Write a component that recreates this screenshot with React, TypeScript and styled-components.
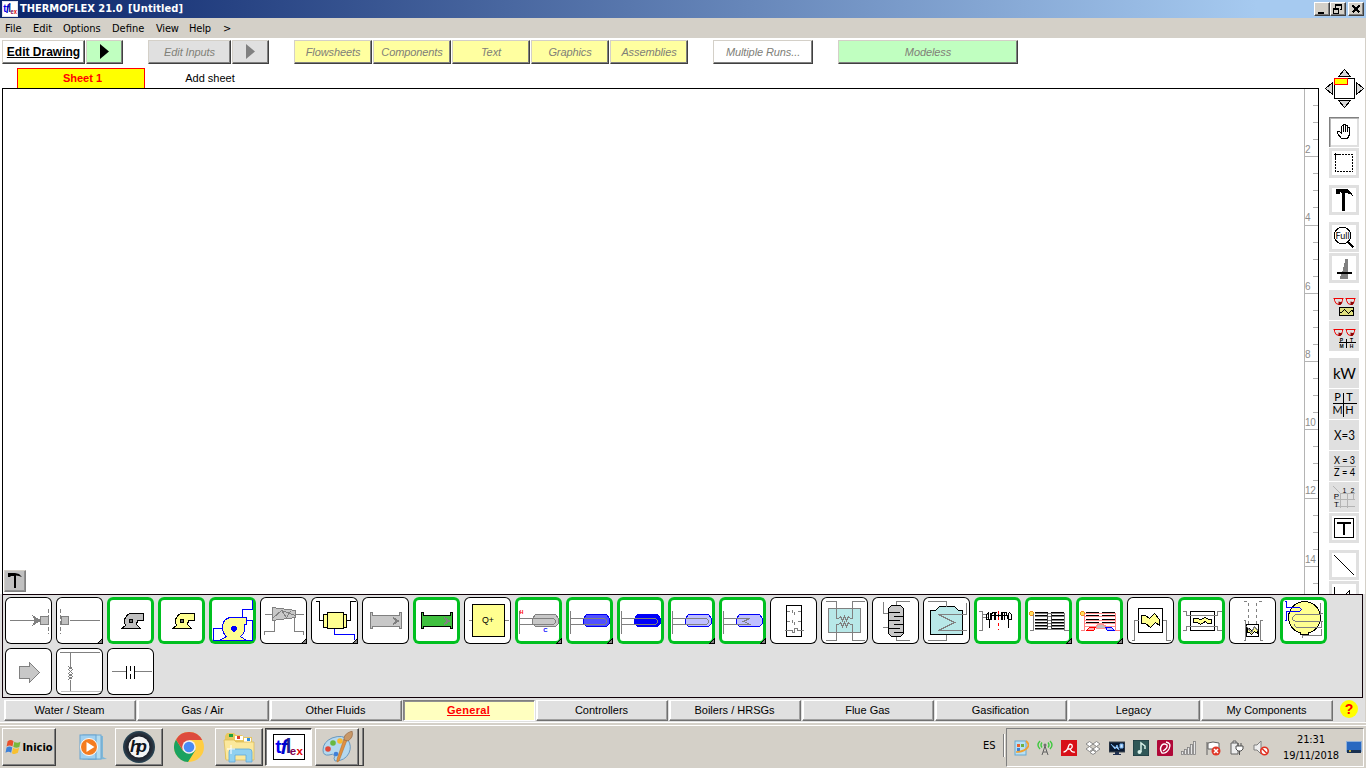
import React from "react";
import styled, { createGlobalStyle, css } from "styled-components";

const tahoma = `"DejaVu Sans Condensed", "DejaVu Sans", sans-serif`;
const arial = `"Liberation Sans", Arial, sans-serif`;

const Global = createGlobalStyle`
  body { margin: 0; overflow: hidden; background: #fff; font-family: ${arial}; font-size: 11px; color: #000; }
  * { box-sizing: border-box; }
  svg { display: block; flex: none; }
`;

const Window = styled.div`
  width: 1366px; height: 768px; display: flex; flex-direction: column; overflow: hidden;
`;

/* ---------- title and menu ---------- */
const TitleBar = styled.header`
  height: 18px; flex: none; display: flex; align-items: center; padding: 0 1px 0 2px;
  background: linear-gradient(90deg, #0a246a, #a6caf0 92%);
  color: #fff; font: bold 11px ${tahoma};
`;
const TitleText = styled.span<{ $w: number; $ls: number }>`
  width: ${p => p.$w}px; letter-spacing: ${p => p.$ls}px; white-space: nowrap; line-height: 18px;
`;
const TitleLogo = styled.div`width: 18px; height: 16px;`;
const WindowButtons = styled.div`margin-left: auto; display: flex; padding-right: 1px;`;
const WindowButton = styled.div<{ $gap?: boolean }>`
  width: 16px; height: 14px; margin-left: ${p => (p.$gap ? 2 : 0)}px; background: #d4d0c8;
  border: 1px solid; border-color: #fff #404040 #404040 #fff; box-shadow: inset -1px -1px #808080;
`;
const MenuBar = styled.nav`
  height: 20px; flex: none; display: flex; align-items: center; padding-left: 5px;
  background: #d4d0c8; font: 11px ${tahoma};
`;
const MenuItem = styled.span<{ $w: number; $ls?: number }>`
  width: ${p => p.$w}px; letter-spacing: ${p => p.$ls ?? 0}px; white-space: nowrap;
`;

/* ---------- workspace ---------- */
const Workspace = styled.main`height: 556px; flex: none; display: flex; background: #fff;`;
const LeftPane = styled.div`width: 1319px; display: flex; flex-direction: column;`;
const Toolbar = styled.div`height: 26px; padding: 2px 0 0 2px; display: flex; gap: 1px;`;
const ToolButton = styled.div<{ $w: number; $bg: string; $ml?: number; $live?: boolean }>`
  width: ${p => p.$w}px; height: 24px; margin-left: ${p => p.$ml ?? 0}px; flex: none;
  display: flex; align-items: center; justify-content: center; background: ${p => p.$bg};
  border: solid; border-width: 1px; border-color: #d4d0c8 #404040 #404040 #d4d0c8;
  box-shadow: inset -1px -1px #808080; white-space: nowrap; padding: 0 0 1px 0;
  font: italic 11px ${arial}; color: #808078; letter-spacing: -.1px;
  ${p => p.$live && css`font: bold 12px ${arial}; color: #000; text-decoration: underline; letter-spacing: 0;`}
`;
const SheetBar = styled.div`height: 24px; padding: 4px 0 0 17px; display: flex; align-items: stretch;`;
const SheetTab = styled.div`
  width: 128px; background: #ff0; border: 1px solid #f00; border-bottom: 0; color: #f00;
  font-weight: bold; text-align: center; line-height: 19px; padding-left: 3px;
`;
const AddSheet = styled.div`width: 130px; text-align: center; line-height: 20px;`;
const CanvasBox = styled.section`
  height: 506px; margin-left: 2px; border: solid #000; border-width: 1px 1px 0 1px;
  display: flex; align-items: flex-end; overflow: hidden;
`;
const CanvasArea = styled.div`flex: 1; padding: 0 0 2px 1px;`;
const HammerButton = styled.div`
  width: 22px; height: 22px; background: #c0c0c0; border: 1px solid;
  border-color: #d4d0c8 #808080 #808080 #d4d0c8; box-shadow: inset -1px -1px #909090;
`;
const Ruler = styled.div`
  width: 14px; height: 505px; border-left: 1px solid #b4b4b4; overflow: hidden;
  display: flex; flex-direction: column; align-items: flex-end; color: #8c8c8c; font: 10px ${arial};
`;
const Tick = styled.div<{ $major: boolean }>`
  width: ${p => (p.$major ? 13 : 5)}px; height: 17.07px; flex: none; border-bottom: 1px solid #b4b4b4;
  line-height: 10px; padding-top: 5px; letter-spacing: -.4px; white-space: nowrap;
`;

const RightPane = styled.aside`
  width: 47px; border-right: 1px solid #d4d0c8; padding: 31px 0 0 6px; overflow: hidden;
`;
const ToolGroup = styled.div<{ $mt?: number }>`
  margin: ${p => p.$mt ?? 7}px 0 0 4px; display: flex; flex-direction: column; gap: 1px;
`;
const SideTool = styled.div<{ $kind: "white" | "gray" | "pressed" }>`
  width: 30px; height: 30px; background: ${p => (p.$kind === "gray" ? "#e0e0e0" : "#fff")};
  ${p => p.$kind === "white" && css`box-shadow: inset 0 0 0 3px #e0e0e0;`}
  ${p => p.$kind === "pressed" && css`box-shadow: inset 1px 1px #808080, inset 2px 2px #b8b8b8, inset -2px -2px #e0e0e0;`}
`;

/* ---------- palette ---------- */
const Palette = styled.section`
  height: 104px; width: 1361px; flex: none; margin-left: 2px; background: #e0e0e0; border: 1px solid #100008;
  padding: 2px; display: flex; flex-wrap: wrap; gap: 4px; align-content: flex-start;
`;
const Bottom = styled.div`flex: none; height: 128px; background: #e0e0e0; border-right: 1px solid #d4d0c8;`;
const Tile = styled.div<{ $green?: boolean }>`
  width: 47px; height: 47px; background: #fff; border-radius: 6px;
  box-shadow: inset 0 0 0 ${p => (p.$green ? "3px #00c020" : "1px #000")};
`;
const CategoryBar = styled.div`height: 24px; padding: 2px 0 0 4px; display: flex; gap: 1px;`;
const Category = styled.div<{ $on?: boolean }>`
  width: 132px; height: 21px; padding-right: 1px; text-align: center; line-height: 18px; background: #e0e0e0; flex: none;
  border: 1px solid; border-color: #fff #707070 #707070 #fff; box-shadow: inset -1px -1px #a0a0a0, inset 1px 0 #fff;
  ${p => p.$on && css`background: #ffffc0; color: #f00; font-weight: bold; text-decoration: underline; letter-spacing: .3px;
    border-color: #808080 #fff #fff #808080; box-shadow: inset 1px 1px #909090;`}
`;
const Help = styled.div`
  width: 18px; height: 18px; border-radius: 50%; background: #ff0; color: #f00; margin: 0 0 0 6px;
  font: bold 14px/18px ${arial}; text-align: center;
`;

/* ---------- taskbar ---------- */
const Taskbar = styled.footer`
  height: 46px; flex: none; background: #d4d0c8; border-top: 1px solid #fff; box-shadow: inset 0 2px #d4d0c8, inset 0 3px #fff;
  display: flex; padding: 5px 2px 1px 2px;
`;
const TaskButton = styled.div<{ $w: number; $ml?: number; $look?: "up" | "down" | "flat" }>`
  width: ${p => p.$w}px; height: 38px; margin-left: ${p => p.$ml ?? 0}px; flex: none;
  display: flex; align-items: center; justify-content: center;
  ${p => (p.$look ?? "up") === "up" && css`border: 1px solid; border-color: #fff #404040 #404040 #fff; box-shadow: inset -1px -1px #808080;`}
  ${p => p.$look === "down" && css`background: #fff; border: 1px solid; border-color: #404040 #fff #fff #404040; box-shadow: inset 1px 1px #808080;`}
  font: bold 11px ${tahoma}; gap: 0;
`;
const StackEdge = styled.div`width: 5px; height: 38px; border: solid #404040; border-width: 0 1px 1px 0; box-shadow: inset -1px 0 #808080;`;
const Lang = styled.div`margin-left: auto; font: 11px/35px ${tahoma}; width: 20px;`;
const Grip = styled.div`width: 2px; margin: 6px 1px 10px 0; background: linear-gradient(90deg, #808080 50%, #fff 50%);`;
const Tray = styled.div`
  width: 358px; height: 39px; border: 1px solid; border-color: #808080 #fff #fff #808080;
  display: flex; align-items: center; padding-left: 6px;
`;
const TrayIcons = styled.div`display: flex; gap: 8px;`;
const Clock = styled.div`
  width: 56px; margin-left: 14px; text-align: center; font: 11px/16px ${tahoma}; white-space: nowrap; letter-spacing: -.1px;
`;
const DesktopIcon = styled.svg`margin-left: 7px;`;

/* ---------- drawing helpers ---------- */
const G = "#808080";
const L = ({ d, c = G, w = 1, f = "none", dash }: { d: string; c?: string; w?: number; f?: string; dash?: string }) => (
  <path d={d} stroke={c} strokeWidth={w} fill={f} strokeDasharray={dash} />
);
const Art = ({ s, children }: { s: number; children: React.ReactNode }) => (
  <svg width={s} height={s} viewBox={`0 0 ${s} ${s}`} shapeRendering="crispEdges">
    <g transform="translate(.5 .5)">{children}</g>
  </svg>
);
const Txt = ({ x, y, s, c = "#000", b, thin, children, w }: { x: number; y: number; s: number; c?: string; b?: boolean; thin?: boolean; w?: number; children: string }) => (
  <text x={x} y={y} fontSize={s} fill={c} textAnchor="middle" fontFamily={thin ? `Lato, ${arial}` : arial} fontWeight={b ? 700 : 400}
    textLength={w} lengthAdjust="spacingAndGlyphs">{children}</text>
);

const Fan = ({ f }: { f: string }) => (
  <>
    <L d="M14 31H33L29 27L30 23H36V16H24A8 8 0 0 0 18 28L14 31Z" c="#000" f={f} />
    <rect x="22" y="22" width="3" height="3" fill="#707070" stroke="#000" />
  </>
);
const Pipe = ({ f, c }: { f: string; c: string }) => (
  <>
    <path d="M8 15H10V18H37V15H39V31H37V29H10V31H8Z" fill={f} stroke={c} />
    <path d="M31 20L36 23.5L31 27L33 23.5Z" fill={G} stroke={G} />
  </>
);
const Capsule = ({ f, c, zig }: { f: string; c: string; zig?: boolean }) => (
  <>
    <path d="M20 17H40L43 21V26L40 29H20L17 26V21Z" fill={f} stroke={c} />
    <path d="M4 13V36" stroke={G} />
    {zig ? <L d="M4 21H30L24 24L31 27H4" /> : <L d="M4 21H38L40 23V25L38 27H4" />}
  </>
);
const Bank = ({ d, gray }: { d: string; gray?: boolean }) => (
  <>
    <circle cx="6" cy="16" r="2" fill="#ffe060" stroke="#f09020" />
    {[15, 18, 22, 25, 28, 31].map(y => (
      <g key={y}>
        {gray && <path d={`M9 ${y + 1}H39`} stroke={d} />}
        {!gray && y < 31 && <path d={`M8 ${y + 1}H39`} stroke={d} />}
        {(gray || y < 28) && <path d={`M9 ${y}H22M25 ${y}H38`} stroke="#000" />}
      </g>
    ))}
    {gray && <path d="M22 15V31M26 16V31" stroke="#404040" />}
  </>
);

type Item = { g?: boolean; m?: boolean; art: React.ReactNode };
const tiles: Item[] = [
  { art: <><L d="M43 11V36" dash="4 2" /><L d="M4 23H30" /><path d="M28 19L35 23L28 27L30 23Z" fill={G} stroke={G} /><rect x="35" y="19" width="8" height="8" fill="#c0c0c0" stroke={G} /></> },
  { m: true, art: <><L d="M4 11V36" dash="4 2" /><L d="M13 23H43" /><rect x="5" y="19" width="7" height="8" fill="#c0c0c0" stroke={G} /></> },
  { g: true, art: <Fan f="#c0c0c0" /> },
  { g: true, art: <Fan f="#ffff90" /> },
  { g: true, art: <><path d="M10 43L17 39A12 12 0 0 1 16 22L20 20H37V27H35A12 12 0 0 1 31 39L37 43Z" fill="#ffff90" stroke="#00f" /><path d="M23 28H26L27 30V32L25 34H23L21 32V30Z" fill="#00f" /><L c="#00f" d="M4 43V31H12M43 2V12H33V20M37 23H43V43M4 43H43" /></> },
  { m: true, art: <><path d="M12 10L35 13V20L12 23Z" fill="#c8c8c8" stroke={G} /><L d="M4 17H12M35 17H43M14 22V34H4V37M34 20V34H43V37M12 21L21 13L26 20L30 14M21 13L35 18" /></> },
  { m: true, art: <><L c="#000" d="M4 4H8V23H12M35 23H39V4H44" /><rect x="12" y="17" width="23" height="13" fill="#ffff90" stroke="#000" /><rect x="16" y="15" width="16" height="16" fill="#ffff90" stroke="#000" /><L c="#00f" d="M23 31V37H43V42" /></> },
  { art: <Pipe f="#c8c8c8" c={G} /> },
  { g: true, art: <Pipe f="#40c040" c="#000" /> },
  { art: <><L d="M4 23H8M40 23H44" /><rect x="8" y="7" width="32" height="32" fill="#ffff90" stroke="#000" /><Txt x={23.5} y={25.5} s={9} w={12}>Q+</Txt></> },
  { g: true, m: true, art: <><Capsule f="#c8c8c8" c={G} /><Txt x={6} y={16} s={5} c="#f00" b>H</Txt><Txt x={30} y={34} s={6} c="#00f" b>C</Txt></> },
  { g: true, m: true, art: <Capsule f="#5050ff" c="#0000f0" /> },
  { g: true, art: <Capsule f="#0000f8" c="#0000f8" /> },
  { g: true, m: true, art: <Capsule f="#c0c0ff" c="#0000f8" /> },
  { g: true, m: true, art: <Capsule f="#c0c0ff" c="#0000f8" zig /> },
  { art: <><rect x="16" y="8" width="15" height="31" stroke="#000" fill="#fff" /><L d="M16 14H19M22 12V15M24 14V17M27 14H30M16 24H19M22 22V25M24 24V27M27 24H30M14 33H22V35H24V31H27V33H33" /></> },
  { art: <><rect x="7" y="11" width="32" height="24" fill="#b8e8e8" stroke={G} /><L d="M4 4H15V21H17L19 19L21 23L23 19L25 23L27 19L29 21H31V4H43M4 43H15V27H17L19 25L21 29L23 25L25 29L27 25L29 27H31V43H43" /></> },
  { art: <><L d="M11 4V16H16M10 30H16M24 8V4H37M24 39V43H37" /><path d="M19 8H28L31 11V36L28 39H19L16 36V11Z" fill="#c8c8c8" stroke="#000" /><L c="#000" d="M16 15H27M21 19H31M16 23H27M21 27H31M16 31H27M21 35H31" /></> },
  { art: <><path d="M7 13H12L16 9H31L35 13H39V37H7Z" fill="#b8e8e8" stroke="#000" /><L d="M4 4H23V9M43 5V17H15L31 25L15 33H43M4 43H23V37" /></> },
  { g: true, art: <><L d="M4 14H8V33H4M8 17H14M8 20H14" /><L c="#000" d="M15 30V22H12V17L14 15V22M16 15V22M18 15L17 17V22M20 15V22M21 15V22M24 15V22M27 15V22M28 15V22M30 15V22M32 15L33 22M34 15V22H37V17L35 15M34 22V30M17 15H22M26 15H32M16 18H34" /><L c="#f00" d="M24 13V32" dash="3 3" /></> },
  { g: true, m: true, art: <><Bank gray d={G} /><L d="M4 33H8V16M39 15V33H43" /></> },
  { g: true, m: true, art: <><Bank d="#ff9090" /><L c="#ff8080" d="M4 33H8V16M39 15V33H43" /><path d="M20 31V28H21V27H27V28H29V31Z" fill="#c0c0c0" stroke="#ff9090" /><path d="M10 33L13 30H19L17 33Z" fill="#ffb0b0" stroke="#f00" /><path d="M29 30H35L38 33H31Z" fill="#c0c0ff" stroke="#00f" /></> },
  { art: <><rect x="11" y="11" width="24" height="24" fill="#fff" stroke="#000" /><L d="M4 43H7V23H11M35 23H39V43H43" /><path d="M14 18H18L22 21L27 16L32 22V28L28 25L23 30L18 26H14Z" fill="#ffff90" stroke="#000" /></> },
  { g: true, art: <><rect x="12" y="14" width="24" height="19" fill="#fff" stroke="#000" /><L d="M4 14H8V18H39V14H43M4 33H8V29H39V33H43" /><path d="M15 21H19L22 22L27 20L30 22H33V26H29L27 24L22 27L19 25H15Z" fill="#ffff90" stroke="#000" /></> },
  { art: <><L d="M14 4H19V27M32 4H27V27" dash="3 3" /><rect x="17" y="27" width="12" height="12" fill="#fff" stroke="#000" /><path d="M18 31H20L22 33L25 30L28 33V36L25 34L22 37L20 35H18Z" fill="#ffff90" stroke="#000" /><L d="M14 23H16V43H14M33 23H31V43H33M17 29L22 35L25 29L29 34" /></> },
  { g: true, art: <><circle cx="24" cy="20" r="16" fill="#ffff90" stroke="#000" /><path d="M20 35V37H28V35" fill="#ffff90" stroke="#000" /><L c="#00f" d="M4 4H6V10H19L21 12L19 14H6V23H4" /><L d="M40 5V17H15L12 20V22L15 24H42M41 24V30H16L14 28V26M40 16H42M22 40V38H41V31" /></> },
  { art: <path d="M14 18H24V14L34 24L24 34V30H14Z" fill="#c8c8c8" stroke={G} /> },
  { art: <><L d="M3 4H43M14 4V18M14 31V43" /><L d="M4 43H44" c="#c0c0c0" /><L d="M12 18L16 21L12 25L16 28L12 31M16 18L12 21L16 25L12 28L16 31" /></> },
  { art: <><L d="M4 23H19M27 23H44" /><L c="#000" d="M19 17V30M27 17V30" /><L c="#000" d="M23 17V30" dash="5 3" /></> },
];

const Cups = () => (
  <g shapeRendering="auto">
    <L c="#f00000" d="M4 8H14M5 8V10Q6 14 9.500 14Q12 14 13 10V8M16 8H26M17 8V10Q18 14 21 14Q24 14 25 10V8" />
    <path d="M9 11L13 12L11 14.500H9ZM21 11L25 12L23 14.500H21Z" fill="#900000" />
  </g>
);

const groups: { k: "white" | "gray" | "pressed"; a: React.ReactNode }[][] = [
  [
    { k: "pressed", a: <path d="M12 21L8 16V14H10L12 16V9L13 8L14 9V7H16V8L18 8V10L20 10V17L18 21Z M14 9V14M16 8V14M18 10V14" fill="#fff" stroke="#000" /> },
    { k: "white", a: <><rect x="6" y="6" width="17" height="17" fill="none" stroke="#000" strokeDasharray="2 1" /><L c="#000" d="M6 4V9M4 6H9" /></> },
  ],
  [{ k: "white", a: <path d="M6.500 3.500H17.500L21.500 6.500L23.500 10.500L20.500 8.500L15.500 7.500V25.500H12.500V7.500L10.500 6.500V8.500H6.500Z" fill="#000" /> }],
  [
    { k: "white", a: <><circle cx="13" cy="13" r="8.3" fill="#fff" stroke="#000" /><L c="#000" w={2} d="M18 19L24 25" /><Txt x={13} y={16.5} s={10} w={14} thin>Full</Txt></> },
    { k: "white", a: <><path d="M16 5H18L19 25H10L13 17Z" fill={G} /><L c="#000" w={2} d="M7 19.5H22" /></> },
  ],
  [
    { k: "gray", a: <><Cups /><rect x="10" y="17" width="14" height="8" fill="#e0e080" stroke="#000" /><L c="#000" d="M10 22H12L15 19L19 23L22 20L24 21" /></> },
    { k: "gray", a: <><Cups /><L c="#000" d="M9 21H26M17 17V26" /><Txt x={12} y={20} s={5} b>P</Txt><Txt x={22} y={20} s={5} b>T</Txt><Txt x={12} y={26} s={5} b>M</Txt><Txt x={22} y={26} s={5} b>H</Txt></> },
  ],
  [
    { k: "gray", a: <Txt x={15} y={20} s={16} w={23} thin>kW</Txt> },
    { k: "gray", a: <><L c="#000" d="M14 3V27M3 14H27" /><Txt x={8} y={11.5} s={11} thin>P</Txt><Txt x={20} y={11.5} s={11} thin>T</Txt><Txt x={8} y={24.5} s={11} thin>M</Txt><Txt x={20} y={24.5} s={11} thin>H</Txt></> },
    { k: "gray", a: <Txt x={15} y={19.5} s={14} w={21} thin>X=3</Txt> },
    { k: "gray", a: <><Txt x={15} y={12} s={11} w={21} thin>X = 3</Txt><L c="#a0a0a0" d="M4 15H26" /><Txt x={15} y={24.500} s={11} w={21} thin>Z = 4</Txt></> },
    { k: "gray", a: <><L c="#b4b4b4" d="M4 4L11 11V25M18 11V25M11 11H25M5 17H25M5 24H25M24 11V17" /><Txt x={15} y={10} s={7}>1</Txt><Txt x={23} y={10} s={7}>2</Txt><Txt x={7} y={16.500} s={8}>P</Txt><Txt x={7} y={24} s={8}>T</Txt></> },
    { k: "white", a: <><rect x="5" y="5" width="19" height="19" fill="#fff" stroke="#000" /><path d="M7.500 8.500H21.500V10.500H15.500V21.500H13.500V10.500H7.500Z" fill="#000" /></> },
  ],
  [
    { k: "white", a: <L c="#000" d="M5 5L25 25" /> },
    { k: "white", a: <L c="#000" d="M5 5V25M16 13L20 9V13" /> },
  ],
];

const TflexLogo = ({ w, h, border }: { w: number; h: number; border?: boolean }) => (
  <svg width={w} height={h} viewBox="0 0 32 26" preserveAspectRatio="none">
    <rect x=".5" y=".5" width="31" height="25" fill="#fff" stroke={border ? "#000" : "#fff"} />
    <g fontFamily={arial} textAnchor="middle">
      <text x="5.500" y="18.500" fontSize="19" fill="#0000f0">t</text>
      <text x="11" y="20" fontSize="21" fontStyle="italic" fill="#0000d0">f</text>
      <text x="15.500" y="18.500" fontSize="20" fill="#202090">l</text>
      <text x="20" y="21" fontSize="11.5" fontWeight="700" fill="#800050">e</text>
      <text x="26.600" y="21" fontSize="11.5" fontWeight="700" fill="#e00000">x</text>
    </g>
  </svg>
);

const Flag = () => (
  <svg width="17" height="16" viewBox="0 0 15 15">
    <path d="M2 2Q5 0 7.5 2L6.500 7Q4 5 1 7Z" fill="#e8502c" /><path d="M8.300 2.500Q11 4.500 14 2.500L13 7.500Q10 9 7.300 7.300Z" fill="#78b83c" />
    <path d="M1 8Q4 6 6.300 8L5.300 13Q3 11 0 13Z" fill="#3c80d8" /><path d="M7.100 8.300Q10 10 12.800 8.300L11.600 13Q8.500 15 6 13.300Z" fill="#f8c030" />
  </svg>
);
const MediaIcon = () => (
  <svg width="32" height="32" viewBox="0 0 32 32">
    <path d="M11 4L27 5V26L31 28L12 29Z" fill="#80b8d8" /><rect x="7" y="4" width="18" height="24" fill="#b4dcf0" stroke="#70a8d0" />
    <rect x="4" y="4" width="16" height="24" fill="#a0d0f0" stroke="#68a4d0" />
    <circle cx="13" cy="16" r="8.500" fill="#f47c20" stroke="#fff" /><path d="M10.500 11V21L18.500 16Z" fill="#fff" />
  </svg>
);
const HpIcon = () => (
  <svg width="32" height="32" viewBox="0 0 32 32">
    <defs><radialGradient id="hp"><stop offset=".5" stopColor="#10141c" /><stop offset=".85" stopColor="#28303c" /><stop offset="1" stopColor="#284858" /></radialGradient></defs>
    <circle cx="16" cy="16" r="16" fill="url(#hp)" /><circle cx="16" cy="16" r="10.500" fill="#f4f4f4" />
    <text x="15.500" y="21" fontSize="17" fontWeight="700" fontStyle="italic" fill="#10141c" textAnchor="middle" fontFamily={arial} textLength="17">hp</text>
  </svg>
);
const ChromeIcon = () => (
  <svg width="30" height="30" viewBox="0 0 30 30">
    <circle cx="15" cy="15" r="15" fill="#ffcd42" /><path d="M15 15L2 7.500A15 15 0 0 1 28.200 8H15Z" fill="#dd4b3e" />
    <path d="M2 7.500A15 15 0 0 0 14 30L21.500 18L15 15L8.800 18.500Z" fill="#1aa260" /><path d="M2 7.500L8.800 18.500L15 8H2Z" fill="#dd4b3e" />
    <circle cx="15" cy="15" r="6.800" fill="#f1f1f1" /><circle cx="15" cy="15" r="5.300" fill="#4a8af4" />
  </svg>
);
const FolderIcon = () => (
  <svg width="34" height="32" viewBox="0 0 34 32">
    <path d="M3 5L5 2H12L14 4H20L22 6H30V28H3Z" fill="#e8c860" /><rect x="7" y="3" width="4" height="3" fill="#20a040" />
    <rect x="13" y="5" width="8" height="4" fill="#fff" /><rect x="15" y="5" width="3" height="3" fill="#e04030" /><rect x="22" y="7" width="7" height="4" fill="#fff" /><rect x="25" y="7" width="3" height="3" fill="#3090e0" />
    <path d="M2 9H12L14 11H32V29H4Z" fill="#fbe89c" stroke="#d8b850" strokeWidth=".7" />
    <path d="M7 31V21Q7 18 10 18H27Q30 18 30 21V31H24V24H13V31Z" fill="#90d0f0" stroke="#60a8d8" strokeWidth=".8" /><path d="M9 14V23M5 18H13" stroke="#fff" />
  </svg>
);
const PaintIcon = () => (
  <svg width="33" height="32" viewBox="0 0 33 32">
    <path d="M2 19Q2 11 11 7Q22 3 27 9Q31 15 28 22Q24 30 14 30Q12 27 14 25Q12 22 8 24Q2 25 2 19Z" fill="#b4d8ee" stroke="#6898c0" />
    <circle cx="7" cy="18" r="2.800" fill="#e04838" /><circle cx="12" cy="12" r="2.800" fill="#68b840" /><circle cx="19" cy="10" r="2.800" fill="#f8b830" /><circle cx="15" cy="23" r="2.300" fill="#4080d8" />
    <path d="M26 9L18 30L16 31V28L23 8Z" fill="#e09040" stroke="#b06820" strokeWidth=".5" /><path d="M23 9Q22 3 31 0Q33 6 27 10Z" fill="#c89868" stroke="#906038" strokeWidth=".6" />
  </svg>
);

const trayArt: React.ReactNode[] = [
  <><rect x="2" y="1" width="11" height="14" fill="#b8e0f4" stroke="#68a8d0" /><path d="M4 4H7V7H4Z" fill="#e86030" /><path d="M8 4H11V7H8Z" fill="#70b040" /><path d="M4 8H7V11H4Z" fill="#4080d0" /><path d="M13 1Q18 5 13 9Q9 12 3 12" stroke="#f0a030" strokeWidth="1.700" fill="none" /></>,
  <><path d="M3 1Q-1 5 3 9M5 2.500Q3 5 5 7.500M13 1Q17 5 13 9M11 2.500Q13 5 11 7.500" stroke="#40c840" strokeWidth="1.400" fill="none" /><path d="M8 6L5 15M8 6L11 15M6 12H10" stroke="#606060" fill="none" /><circle cx="8" cy="5" r="1.500" fill="#707070" /></>,
  <><rect width="16" height="16" fill="#d81018" /><path d="M2.500 12Q6 12 8 5Q9 3.500 11 5Q12 8 9 9H6M9 9Q11 13 14 12" stroke="#fff" strokeWidth="1.300" fill="none" /></>,
  <path d="M4.500 1.500L8 4L4.500 6.500L1 4ZM11.500 1.500L15 4L11.500 6.500L8 4ZM4.500 6.500L8 9L4.500 11.500L1 9ZM11.500 6.500L15 9L11.500 11.500L8 9ZM8 10L11 12.500L8 14.500L5 12.500Z" fill="#fff" stroke="#808080" strokeWidth=".9" />,
  <><rect y="2" width="16" height="10" fill="#081830" stroke="#404850" /><path d="M2 4L6 9L8 5L10 10M11 4H14V8H11Z" stroke="#70b0f0" fill="#d0e8ff" /><path d="M6 12H10V14H12V15H4V14H6Z" fill="#203050" /></>,
  <><rect width="16" height="16" fill="#305858" stroke="#183038" /><path d="M8 12V3L12 6V9" stroke="#d8f0e8" strokeWidth="1.500" fill="none" /><circle cx="6.500" cy="12" r="2" fill="#d8f0e8" /></>,
  <><rect width="16" height="16" rx="1" fill="#b00838" /><path d="M9 2Q15 3 12 9Q9 14 5 13Q2 9 5 5Q7 3 10 5Q11 8 6 11" stroke="#fff" strokeWidth="1.400" fill="none" /></>,
  <>{[3, 5, 7, 10, 13].map((h, i) => <rect key={h} x={i * 3 + .5} y={14.5 - h} width="2" height={h} fill="#e8e8e8" stroke="#808080" strokeWidth=".8" />)}</>,
  <><path d="M2 2V15M3 3L8 2L14 3V9H3Z" fill="#fff" stroke="#606060" /><circle cx="11" cy="11" r="4.500" fill="#e03828" /><path d="M9 9L13 13M13 9L9 13" stroke="#fff" strokeWidth="1.500" /></>,
  <><path d="M2 3H9V14H2ZM4 3V1H7V3" fill="#eee" stroke="#606060" /><path d="M7 6H14V9L12 11H9L7 9ZM9 3V6M12 3V6M10.500 11V15" fill="#fff" stroke="#505050" /></>,
  <><path d="M1 5H4L8 1V14L4 10H1Z" fill="#eee" stroke="#808080" /><circle cx="11.500" cy="11" r="3.700" fill="#fff" stroke="#e03020" strokeWidth="1.600" /><path d="M9 8.500L14 13.500" stroke="#e03020" strokeWidth="1.500" /></>,
];

const menus: [string, number, number][] = [["File", 28, 0], ["Edit", 30, 0], ["Options", 49, -0.1], ["Define", 44, 0], ["View", 33, -0.2], ["Help", 34, -0.2], [">", 12, 0]];
const categories = ["Water / Steam", "Gas / Air", "Other Fluids", "General", "Controllers", "Boilers / HRSGs", "Flue Gas", "Gasification", "Legacy", "My Components"];

const Play = ({ c }: { c: string }) => <svg width="9" height="15" viewBox="0 0 9 15"><path d="M0 0L9 7.500L0 15Z" fill={c} /></svg>;

export default function App() {
  return (
    <Window>
      <Global />
      <TitleBar>
        <TitleLogo><TflexLogo w={16} h={16} /></TitleLogo>
        <TitleText $w={108} $ls={-0.02}>THERMOFLEX 21.0</TitleText>
        <TitleText $w={60} $ls={0.1}>[Untitled]</TitleText>
        <WindowButtons>
          <WindowButton><Art s={14}><path d="M3 8.500H9V10.500H3Z" transform="translate(-.5 -.5)" /></Art></WindowButton>
          <WindowButton><Art s={14}><L c="#000" d="M4 4V1H10V6H8M4 2H10M2 5H7V10H2ZM2 6H7" /></Art></WindowButton>
          <WindowButton $gap><Art s={14}><L c="#000" w={1.6} d="M3 2L10 9M10 2L3 9" /></Art></WindowButton>
        </WindowButtons>
      </TitleBar>
      <MenuBar>{menus.map(([t, w, ls]) => <MenuItem key={t} $w={w} $ls={ls}>{t}</MenuItem>)}</MenuBar>

      <Workspace>
        <LeftPane>
          <Toolbar>
            <ToolButton $w={83} $bg="#fff" $live>Edit Drawing</ToolButton>
            <ToolButton $w={37} $bg="#c0ffc0"><Play c="#000" /></ToolButton>
            <ToolButton $w={83} $ml={24} $bg="#e0e0e0">Edit Inputs</ToolButton>
            <ToolButton $w={37} $bg="#e0e0e0"><Play c="#808080" /></ToolButton>
            <ToolButton $w={78} $ml={24} $bg="#ffffa0">Flowsheets</ToolButton>
            <ToolButton $w={78} $bg="#ffffa0">Components</ToolButton>
            <ToolButton $w={78} $bg="#ffffa0">Text</ToolButton>
            <ToolButton $w={78} $bg="#ffffa0">Graphics</ToolButton>
            <ToolButton $w={78} $bg="#ffffa0">Assemblies</ToolButton>
            <ToolButton $w={100} $ml={24} $bg="#fff">Multiple Runs...</ToolButton>
            <ToolButton $w={180} $ml={24} $bg="#c0ffc0">Modeless</ToolButton>
          </Toolbar>
          <SheetBar>
            <SheetTab>Sheet 1</SheetTab>
            <AddSheet>Add sheet</AddSheet>
          </SheetBar>
          <CanvasBox>
            <CanvasArea>
              <HammerButton>
                <svg width="20" height="20" viewBox="0 0 20 20"><path d="M3 2H10L14 3L17 6L14 5L11 4.500V17H9V5H6L5 6H3Z" /></svg>
              </HammerButton>
            </CanvasArea>
            <Ruler>
              {Array.from({ length: 29 }, (_, i) => (
                <Tick key={i} $major={(i + 1) % 4 === 0}>{(i + 1) % 4 === 0 ? (i + 1) / 2 : ""}</Tick>
              ))}
            </Ruler>
          </CanvasBox>
        </LeftPane>
        <RightPane>
          <svg width="40" height="39" viewBox="0 0 40 39" shapeRendering="crispEdges">
            <g transform="translate(.5 .5)" stroke="#000" fill="#d8d8d8">
              <path d="M19 0L25 7H13ZM19 38L25 31H13ZM0 19L7 13V25ZM38 19L31 13V25Z" />
              <rect x="9" y="9" width="20" height="20" fill="#fff" />
              <rect x="9" y="9" width="13" height="6" fill="#ff0" stroke="#f00" />
            </g>
          </svg>
          {groups.map((g, i) => (
            <ToolGroup key={i} $mt={i === 0 ? 9 : 7}>
              {g.map((t, j) => <SideTool key={j} $kind={t.k}><Art s={30}>{t.a}</Art></SideTool>)}
            </ToolGroup>
          ))}
        </RightPane>
      </Workspace>

      <Bottom>
        <Palette>
          {tiles.map((t, i) => (
            <Tile key={i} $green={t.g}>
              <Art s={47}>
                {t.art}
                {t.m && <path d="M46 41V46H41Z" fill="#808080" stroke="#000" />}
              </Art>
            </Tile>
          ))}
        </Palette>
        <CategoryBar>
          {categories.map(c => <Category key={c} $on={c === "General"}>{c}</Category>)}
          <Help>?</Help>
        </CategoryBar>
      </Bottom>

      <Taskbar>
        <TaskButton $w={54}><Flag />Inicio</TaskButton>
        <TaskButton $w={47} $ml={12} $look="flat"><MediaIcon /></TaskButton>
        <TaskButton $w={48} $ml={0}><HpIcon /></TaskButton>
        <TaskButton $w={48} $ml={2} $look="flat"><ChromeIcon /></TaskButton>
        <TaskButton $w={48} $ml={2}><FolderIcon /></TaskButton>
        <TaskButton $w={47} $ml={2} $look="down"><TflexLogo w={32} h={26} border /></TaskButton>
        <TaskButton $w={44} $ml={3}><PaintIcon /></TaskButton>
        <StackEdge />
        <Lang>ES</Lang>
        <Grip />
        <Tray>
          <TrayIcons>
            {trayArt.map((a, i) => <svg key={i} width="16" height="16" viewBox="0 0 16 16">{a}</svg>)}
          </TrayIcons>
          <Clock>21:31<br />19/11/2018</Clock>
          <DesktopIcon width="16" height="14" viewBox="0 0 16 14">
            <rect x=".5" y=".5" width="15" height="10" fill="#2868c0" stroke="#90b0d8" /><rect x="1" y="9" width="14" height="3" fill="#183050" /><circle cx="4" cy="10" r="1" fill="#f0d040" />
          </DesktopIcon>
        </Tray>
      </Taskbar>
    </Window>
  );
}
